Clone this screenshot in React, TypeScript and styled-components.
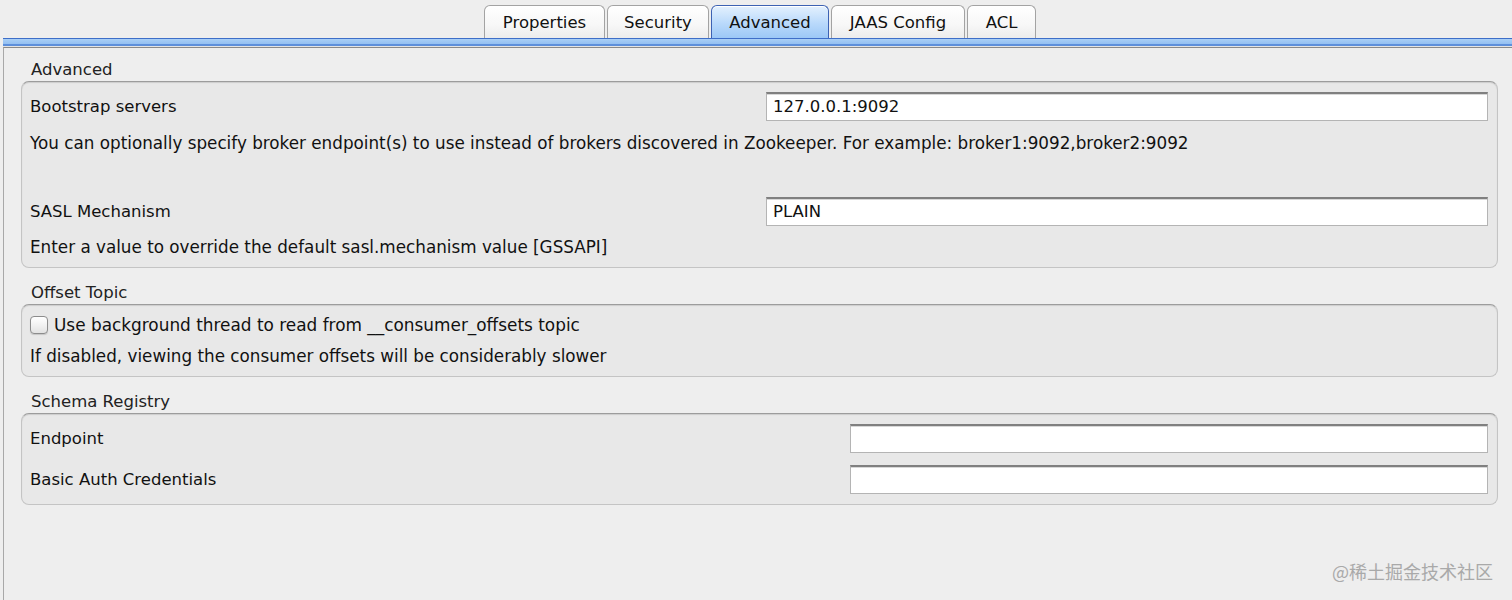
import React from "react";
import styled, { createGlobalStyle } from "styled-components";

const GlobalStyle = createGlobalStyle`
  html, body {
    margin: 0;
    padding: 0;
    background: #eeeeee;
  }
  body {
    font-family: "DejaVu Sans", "Liberation Sans", sans-serif;
    font-size: 16.5px;
    color: #111;
  }
`;

const Window = styled.div`
  position: relative;
  height: 600px;
  background: #eeeeee;
  overflow: hidden;
  display: flex;
  flex-direction: column;
`;

const TabBar = styled.div`
  display: flex;
  justify-content: center;
  gap: 2px;
  padding: 5px 0 0 8px;
  height: 33px;
`;

const Tab = styled.div<{ $active?: boolean; $width: number }>`
  display: flex;
  align-items: center;
  justify-content: center;
  width: ${(p) => p.$width}px;
  height: 33px;
  box-sizing: border-box;
  padding-top: 1px;
  border: 1px solid ${(p) => (p.$active ? "#3d62b3" : "#a3a3a3")};
  border-bottom: none;
  border-radius: 6px 6px 0 0;
  background: ${(p) =>
    p.$active
      ? "linear-gradient(#e4f1fe, #b9d9fb 55%, #9cc8f6)"
      : "linear-gradient(#ffffff, #f7f7f7 60%, #ececec)"};
  box-shadow: inset 0 1px 0 #fff;
  font-size: 16.5px;
  color: #111;
`;

const Band = styled.div`
  margin-left: 3px;
  height: 8px;
  background: linear-gradient(
    #3e6ec8 0,
    #3e6ec8 1px,
    #a9cff6 1px,
    #94c0f2 6px,
    #5d8fdb 6px,
    #5d8fdb 8px
  );
  border-bottom: 1px solid #e4e4e4;
`;

const Content = styled.div`
  flex: 1;
  margin-left: 3px;
  border-left: 1px solid #a8a8a8;
  border-top: 1px solid #8a8a8a;
  padding: 12px 14px 0 17px;
`;

const Section = styled.section`
  margin-bottom: 15px;
`;

const SectionTitle = styled.div`
  height: 20px;
  line-height: 20px;
  padding-left: 10px;
  margin-bottom: 1px;
  color: #222;
`;

const Box = styled.div`
  background: #e8e8e8;
  border: 1px solid #c4c4c4;
  border-top-color: #9c9c9c;
  border-radius: 8px;
  box-shadow: inset 0 1px 1px rgba(0, 0, 0, 0.12);
  padding: 10px 9px 10px 8px;
  display: flex;
  flex-direction: column;
`;

const FieldRow = styled.div<{ $labelWidth: number; $gap?: number }>`
  display: grid;
  grid-template-columns: ${(p) => p.$labelWidth}px 1fr;
  align-items: center;
  height: 29px;
  margin-top: ${(p) => p.$gap ?? 0}px;
`;

const Label = styled.span`
  line-height: 20px;
`;

const Input = styled.div`
  height: 29px;
  box-sizing: border-box;
  background: #fff;
  border: 1px solid #b4b4b4;
  border-top: 2px solid #808080;
  box-shadow: inset 0 1px 0 #d8d8d8;
  padding: 0 6px;
  display: flex;
  align-items: center;
  line-height: 20px;
`;

const Hint = styled.div<{ $gap?: number }>`
  line-height: 20px;
  font-size: 16.8px;
  margin-top: ${(p) => p.$gap ?? 11}px;
`;

const CheckRow = styled.label`
  display: flex;
  align-items: center;
  gap: 6px;
  height: 20px;
  font-size: 16.9px;
`;

const CheckBox = styled.span`
  width: 18px;
  height: 18px;
  box-sizing: border-box;
  border: 1px solid #8c8c8c;
  border-radius: 4px;
  background: linear-gradient(#ffffff, #f2f2f2 50%, #e2e2e2);
  box-shadow: 0 1px 1px rgba(0, 0, 0, 0.15);
`;

const Watermark = styled.div`
  position: absolute;
  right: 19px;
  bottom: 16px;
  font-family: "Noto Sans CJK SC", "DejaVu Sans", sans-serif;
  font-size: 18px;
  color: #a9a9a9;
`;

const tabs = [
  { name: "Properties", width: 121 },
  { name: "Security", width: 102 },
  { name: "Advanced", width: 118, active: true },
  { name: "JAAS Config", width: 134 },
  { name: "ACL", width: 69 },
];

const App = () => {
  return (
    <>
      <GlobalStyle />
      <Window>
        <TabBar>
          {tabs.map((t) => (
            <Tab key={t.name} $active={t.active} $width={t.width}>
              {t.name}
            </Tab>
          ))}
        </TabBar>
        <Band />
        <Content>
          <Section>
            <SectionTitle>Advanced</SectionTitle>
            <Box>
              <FieldRow $labelWidth={736}>
                <Label>Bootstrap servers</Label>
                <Input>127.0.0.1:9092</Input>
              </FieldRow>
              <Hint $gap={12}>
                You can optionally specify broker endpoint(s) to use instead of brokers discovered in
                Zookeeper. For example: broker1:9092,broker2:9092
              </Hint>
              <FieldRow $labelWidth={736} $gap={44}>
                <Label>SASL Mechanism</Label>
                <Input>PLAIN</Input>
              </FieldRow>
              <Hint>Enter a value to override the default sasl.mechanism value [GSSAPI]</Hint>
            </Box>
          </Section>
          <Section>
            <SectionTitle>Offset Topic</SectionTitle>
            <Box>
              <CheckRow>
                <CheckBox />
                <span>Use background thread to read from __consumer_offsets topic</span>
              </CheckRow>
              <Hint>If disabled, viewing the consumer offsets will be considerably slower</Hint>
            </Box>
          </Section>
          <Section>
            <SectionTitle>Schema Registry</SectionTitle>
            <Box>
              <FieldRow $labelWidth={820}>
                <Label>Endpoint</Label>
                <Input />
              </FieldRow>
              <FieldRow $labelWidth={820} $gap={12}>
                <Label>Basic Auth Credentials</Label>
                <Input />
              </FieldRow>
            </Box>
          </Section>
        </Content>
        <Watermark>@稀土掘金技术社区</Watermark>
      </Window>
    </>
  );
};

export default App;
